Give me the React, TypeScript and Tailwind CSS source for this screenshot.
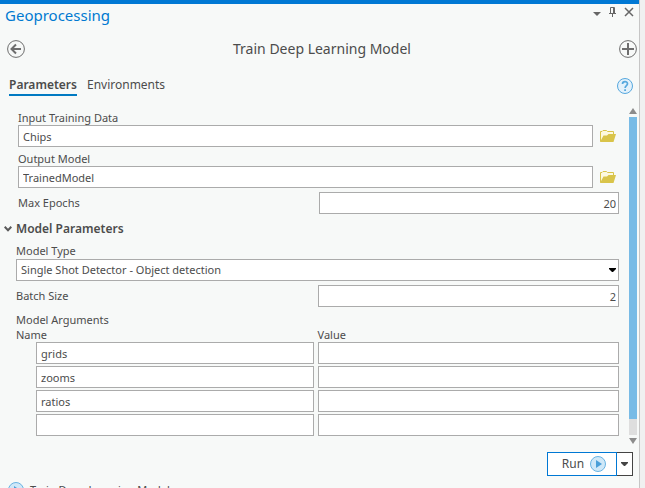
import { useState } from 'react'

const inputClass = 'block h-[22px] border border-[#ababab] bg-white text-[#4c4c4c] outline-none rounded-none'

const initialArgs = [
  { name: 'grids', value: '' },
  { name: 'zooms', value: '' },
  { name: 'ratios', value: '' },
  { name: '', value: '' },
]

function FolderIcon() {
  return (
    <svg width="16" height="12" viewBox="0 0 16 12" aria-hidden="true">
      <path d="M0.5 11.5V1.5H2L3 0.5H6.500L7.500 1.500H13.500V4" fill="#fdf9e0" stroke="#d9c44a" />
      <path d="M0 12L3.500 5.500H7L8.500 4H16L13.500 12Z" fill="#d9c44a" />
    </svg>
  )
}

function PlayIcon() {
  return (
    <svg width="16" height="16" viewBox="0 0 16 16" className="shrink-0" aria-hidden="true">
      <circle cx="8" cy="8" r="7.500" fill="#cfe8f8" stroke="#69b3e2" />
      <path d="M6 4L12 8L6 12Z" fill="#4a9fd8" />
    </svg>
  )
}

function Caret({ color }: { color: string }) {
  return (
    <svg width="7" height="4" viewBox="0 0 7 4" aria-hidden="true">
      <path d="M0 0H7V1L4 4H3L0 1Z" fill={color} />
    </svg>
  )
}

function PathField({ id, label, defaultValue }: { id: string; label: string; defaultValue: string }) {
  return (
    <div className="mb-[4px] pl-[2px]">
      <label htmlFor={id} className="block h-[15px] leading-[16px]">{label}</label>
      <div className="flex items-center gap-[7px] pr-[3px]">
        <input id={id} type="text" defaultValue={defaultValue} className={`${inputClass} min-w-0 flex-1 px-1`} />
        <button type="button" aria-label={`Browse ${label}`} className="shrink-0"><FolderIcon /></button>
      </div>
    </div>
  )
}

function NumberField({ id, label, defaultValue, className }: { id: string; label: string; defaultValue: string; className?: string }) {
  return (
    <div className={`flex items-center ${className ?? ''}`}>
      <label htmlFor={id} className="flex-1">{label}</label>
      <input id={id} type="text" inputMode="numeric" defaultValue={defaultValue} className={`${inputClass} w-1/2 min-w-0 px-[2px] text-right`} />
    </div>
  )
}

export default function App() {
  const [tab, setTab] = useState('Parameters')
  const [open, setOpen] = useState(true)

  return (
    <div className="flex h-screen overflow-hidden bg-[#f0f0f0] font-['Noto_Sans','Open_Sans',sans-serif] text-[11px] leading-4 text-[#4c4c4c]">
      <main className="flex min-w-0 flex-1 flex-col bg-[#f7f9f8]">
        <div className="h-1 shrink-0 bg-[#0078d4]" />

        {/* Pane title */}
        <header className="flex h-6 shrink-0 items-start justify-between pl-[5px] pr-[5px]">
          <h1 className="text-[15px] leading-[22px] text-[#0079d1]">Geoprocessing</h1>
          <div className="flex items-center gap-2 pt-[3px] text-[#666]">
            <button type="button" aria-label="Pane options" className="pt-1">
              <svg width="8" height="4" viewBox="0 0 8 4"><path d="M0 0H8L4 4Z" fill="currentColor" /></svg>
            </button>
            <button type="button" aria-label="Auto hide">
              <svg width="7" height="10" viewBox="0 0 7 10" fill="none" stroke="currentColor">
                <path d="M1.500 6V0.500H5.500V6M4.500 1V6M0 6.500H7M3.500 7V10" />
              </svg>
            </button>
            <button type="button" aria-label="Close">
              <svg width="10" height="10" viewBox="0 0 10 10" fill="none" stroke="currentColor" strokeWidth="1.500"><path d="M1 1L9 9M9 1L1 9" /></svg>
            </button>
          </div>
        </header>

        {/* Tool name */}
        <div className="flex h-[42px] shrink-0 items-center justify-between pl-[7px] pr-[2px] text-[#6e6e6e]">
          <button type="button" aria-label="Back">
            <svg width="18" height="18" viewBox="0 0 18 18" fill="none" stroke="currentColor">
              <circle cx="9" cy="9" r="8.400" />
              <path d="M14 9H5M9 4.500L4.500 9L9 13.500" strokeWidth="2" />
            </svg>
          </button>
          <h2 className="text-[14px] leading-5 text-[#4c4c4c]">Train Deep Learning Model</h2>
          <button type="button" aria-label="Add">
            <svg width="18" height="18" viewBox="0 0 18 18" fill="none" stroke="currentColor">
              <circle cx="9" cy="9" r="8.400" />
              <path d="M9 3V15M3 9H15" strokeWidth="2" />
            </svg>
          </button>
        </div>

        {/* Tabs */}
        <div className="flex h-8 shrink-0 items-center justify-between pl-[9px] pr-[6px]">
          <div role="tablist" className="flex gap-[10px] text-[12px] leading-[18px]">
            {['Parameters', 'Environments'].map(name => (
              <button
                key={name}
                type="button"
                role="tab"
                aria-selected={tab === name}
                onClick={() => setTab(name)}
                className={tab === name ? 'border-b-2 border-[#007ac2] font-semibold' : 'border-b-2 border-transparent'}
              >
                {name}
              </button>
            ))}
          </div>
          <button type="button" aria-label="Help">
            <svg width="16" height="16" viewBox="0 0 16 16" fill="none">
              <circle cx="8" cy="8" r="7.500" fill="#e3f1fb" stroke="#56a8de" />
              <path d="M5.500 6C5.500 2.800 10.500 2.900 10.500 5.800C10.500 7.600 8.100 7.700 8.100 10" stroke="#56a8de" strokeWidth="1.700" />
              <path d="M8.100 11.300V13" stroke="#56a8de" strokeWidth="1.800" />
            </svg>
          </button>
        </div>

        <div className="flex shrink-0 pr-[2px] pt-[6px]">
          <form id="tool" className="min-w-0 flex-1 pb-[6px] pl-4 pr-[10px] pt-[2px]" onSubmit={e => e.preventDefault()}>
            <PathField id="input-data" label="Input Training Data" defaultValue="Chips" />
            <PathField id="output-model" label="Output Model" defaultValue="TrainedModel" />
            <NumberField id="epochs" label="Max Epochs" defaultValue="20" className="pl-[2px]" />

            <button
              type="button"
              aria-expanded={open}
              onClick={() => setOpen(!open)}
              className="-ml-3 mt-[6px] flex items-center gap-1 text-[12px] font-semibold leading-[18px]"
            >
              <svg width="8" height="6" viewBox="0 0 8 6" fill="none" stroke="#5a5a5a" strokeWidth="2"><path d="M0.700 0.800L4 4.200L7.300 0.800" /></svg>
              Model Parameters
            </button>

            {open && (
              <>
                <label htmlFor="model-type" className="mt-[5px] block">Model Type</label>
                <div className="relative mb-1">
                  <select id="model-type" className={`${inputClass} w-full appearance-none px-1`}>
                    <option>Single Shot Detector - Object detection</option>
                  </select>
                  <span className="pointer-events-none absolute right-[3px] top-[9px]"><Caret color="#000" /></span>
                </div>
                <NumberField id="batch" label="Batch Size" defaultValue="2" />

                <table className="mt-1 w-full table-fixed">
                  <caption className="pt-px text-left leading-[15px]">Model Arguments</caption>
                  <thead>
                    <tr className="text-left leading-[15px]">
                      <th className="w-1/2 p-0 font-normal">Name</th>
                      <th className="p-0 font-normal">Value</th>
                    </tr>
                  </thead>
                  <tbody>
                    {initialArgs.map((arg, i) => (
                      <tr key={i}>
                        <td className="pb-[2px] pl-5 pr-1">
                          <input aria-label={`Name ${i + 1}`} defaultValue={arg.name} className={`${inputClass} w-full px-1`} />
                        </td>
                        <td className="pb-[2px]">
                          <input aria-label={`Value ${i + 1}`} defaultValue={arg.value} className={`${inputClass} w-full px-1`} />
                        </td>
                      </tr>
                    ))}
                  </tbody>
                </table>
              </>
            )}
          </form>

          {/* Scrollbar */}
          <div className="flex w-2 shrink-0 flex-col gap-[3px] text-[#8c8c8c]" aria-hidden="true">
            <svg width="8" height="6" viewBox="0 0 8 6"><path d="M0 6H8L4 0Z" fill="currentColor" /></svg>
            <div className="flex-1 bg-[#dedede]">
              <div className="h-[95%] bg-[#78bbe6]" />
            </div>
            <svg width="8" height="6" viewBox="0 0 8 6"><path d="M0 0H8L4 6Z" fill="currentColor" /></svg>
          </div>
        </div>

        <div className="mt-2 flex shrink-0 justify-end pr-[6px]">
          <button type="submit" form="tool" className="flex h-6 w-[70px] items-center justify-center gap-[6px] border border-[#0078d4] bg-white pl-1 text-[12px]">
            Run <PlayIcon />
          </button>
          <button type="button" aria-label="Run options" className="flex h-6 w-4 items-center justify-center border border-l-0 border-[#444] bg-white">
            <Caret color="#444" />
          </button>
        </div>

        <div className="mt-[6px] flex shrink-0 items-center gap-[6px] pl-2">
          <PlayIcon />
          <span>Train Deep Learning Model</span>
        </div>
      </main>
      <div className="w-[6px] shrink-0 border-l border-[#c6c6c6]" />
    </div>
  )
}
